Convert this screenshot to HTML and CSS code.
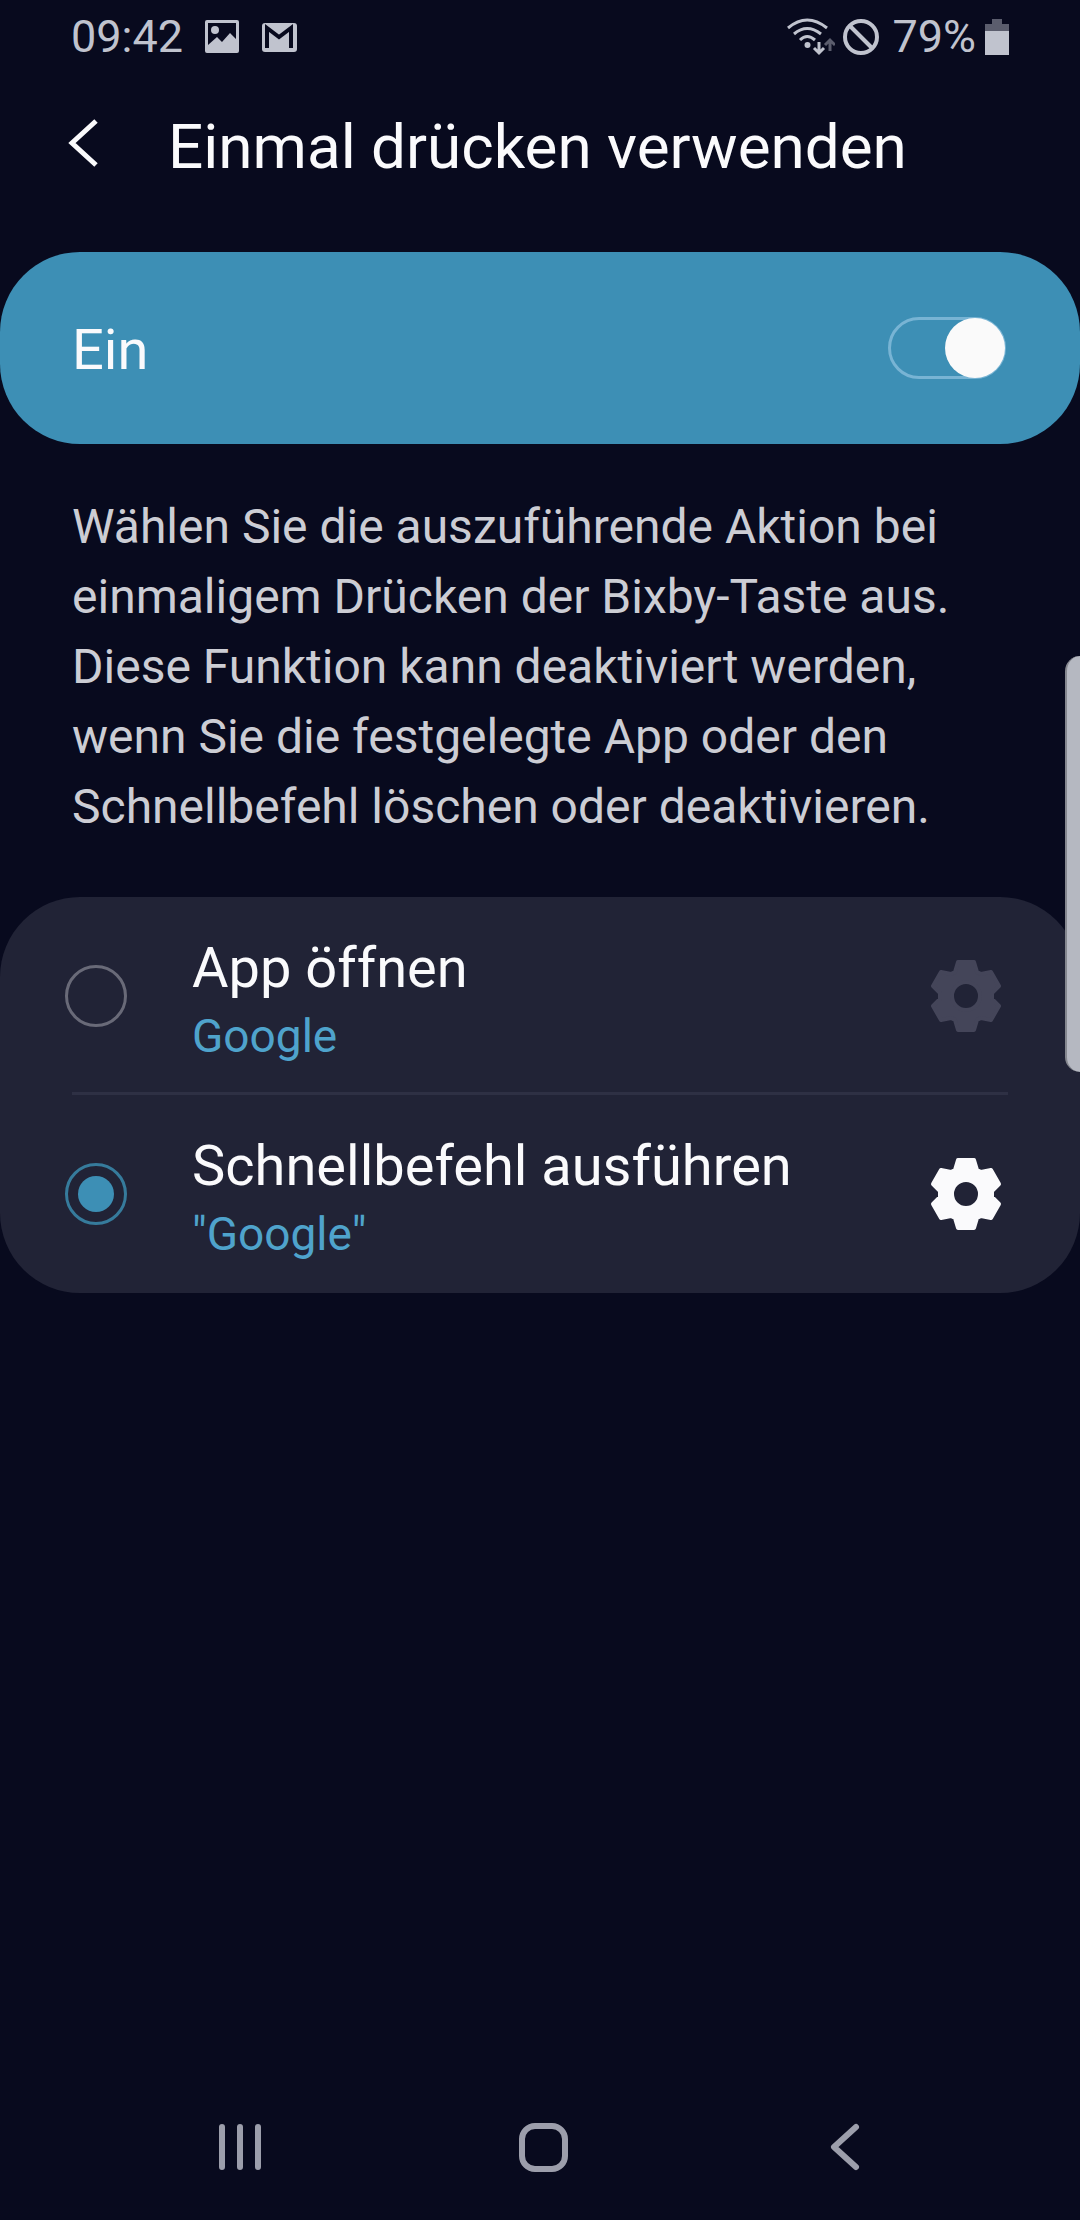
FILE: index.html
```html
<!DOCTYPE html>
<html lang="de">
<head>
<meta charset="utf-8">
<meta name="viewport" content="width=device-width, initial-scale=1">
<title>Einmal drücken verwenden</title>
<link rel="stylesheet" href="styles.css">
</head>
<body>
<div class="status-bar">
  <div class="status-left">
    <span>09:42</span>
    <svg width="36" height="36" viewBox="0 0 36 36" aria-hidden="true">
      <path fill="currentColor" fill-rule="evenodd" d="M3 1H33Q35 1 35 3V32Q35 34 33 34H3Q1 34 1 32V3Q1 1 3 1ZM4 4V26L13 18L18 23L26 14L32 20V4Z"/>
      <circle cx="11" cy="11" r="4" fill="currentColor"/>
    </svg>
    <svg width="36" height="36" viewBox="0 0 36 36" aria-hidden="true">
      <rect x="1" y="4" width="35" height="29" rx="3" fill="currentColor"/>
      <path d="M6 29V9L18 18L30 9V29" fill="none" stroke="#080a1e" stroke-width="4"/>
    </svg>
  </div>
  <div class="status-right">
    <svg width="48" height="38" viewBox="0 0 48 38" aria-hidden="true">
      <g fill="none" stroke="currentColor" stroke-width="3">
        <path d="M1 10Q20 -6 40 10"/>
        <path d="M7 16Q20 5 34 16"/>
        <path d="M13 22Q20 15 28 22"/>
        <path d="M32 24V34M27 30L32 35L37 30"/>
        <path class="faint" d="M43 33V22M38 27L43 22L48 27"/>
      </g>
      <circle cx="20.500" cy="27" r="3" fill="currentColor"/>
    </svg>
    <svg class="blocked" width="38" height="38" viewBox="0 0 38 38" fill="none" stroke="currentColor" stroke-width="4" aria-hidden="true">
      <circle cx="19" cy="19" r="16"/><path d="M8 8L30 30"/>
    </svg>
    <span>79%</span>
    <svg class="battery" width="24" height="36" viewBox="0 0 24 36" fill="currentColor" aria-hidden="true">
      <path class="faint" d="M7 0H17V5H24V12H0V5H7Z"/><path d="M0 12H24V36H0Z"/>
    </svg>
  </div>
</div>

<header class="header">
  <button class="back" type="button" aria-label="Zurück">
    <svg width="36" height="56" viewBox="0 0 36 56" fill="none" stroke="currentColor" stroke-width="5"><path d="M30 2L6 24L30 46"/></svg>
  </button>
  <h1>Einmal drücken verwenden</h1>
</header>

<main>
  <div class="master">
    <label for="master">Ein</label>
    <input class="switch" id="master" type="checkbox" role="switch" checked>
  </div>

  <p class="description">Wählen Sie die auszuführende Aktion bei einmaligem Drücken der Bixby-Taste aus. Diese Funktion kann deaktiviert werden, wenn Sie die festgelegte App oder den Schnellbefehl löschen oder deaktivieren.</p>

  <div class="card" role="radiogroup" aria-label="Aktion">
    <div class="option">
      <input class="radio" type="radio" name="action" id="open-app">
      <label for="open-app"><span class="option-title">App öffnen</span><span class="option-value">Google</span></label>
      <button class="gear" type="button" aria-label="App-Einstellungen" disabled>
        <svg width="72" height="76" viewBox="-36 -38 72 76"><path d="M-8-34H8L11-24L15-22L25-24L33-10L26-3V3L33 10L25 24L15 22L11 24L8 34H-8L-11 24L-15 22L-25 24L-33 10L-26 3V-3L-33-10L-25-24L-15-22L-11-24ZM14 0A14 14 0 1 0-14 0A14 14 0 1 0 14 0Z"/></svg>
      </button>
    </div>
    <hr>
    <div class="option">
      <input class="radio" type="radio" name="action" id="run-command" checked>
      <label for="run-command"><span class="option-title">Schnellbefehl ausführen</span><span class="option-value">"Google"</span></label>
      <button class="gear" type="button" aria-label="Schnellbefehl-Einstellungen">
        <svg width="72" height="76" viewBox="-36 -38 72 76"><path d="M-8-34H8L11-24L15-22L25-24L33-10L26-3V3L33 10L25 24L15 22L11 24L8 34H-8L-11 24L-15 22L-25 24L-33 10L-26 3V-3L-33-10L-25-24L-15-22L-11-24ZM14 0A14 14 0 1 0-14 0A14 14 0 1 0 14 0Z"/></svg>
      </button>
    </div>
  </div>
</main>

<nav class="nav-bar" aria-label="Navigation">
  <button type="button" aria-label="Letzte Apps">
    <svg width="50" height="50" viewBox="0 0 50 50"><path stroke-width="6" d="M6 5V45M24 5V45M42 5V45"/></svg>
  </button>
  <button type="button" aria-label="Startseite">
    <svg width="50" height="50" viewBox="0 0 50 50"><rect x="4" y="4" width="43" height="43" rx="13" stroke-width="6"/></svg>
  </button>
  <button type="button" aria-label="Zurück">
    <svg width="50" height="50" viewBox="0 0 50 50"><path stroke-width="6" d="M36 5L14 25L36 45"/></svg>
  </button>
</nav>

<div class="edge-handle"></div>
</body>
</html>
```

FILE: styles.css
```css
* { box-sizing: border-box; }

body {
  margin: 0;
  min-height: 100vh;
  display: flex;
  flex-direction: column;
  position: relative;
  overflow-x: hidden;
  background: #080a1e;
  color: #fafafc;
  font-family: Roboto, "Liberation Sans", sans-serif;
}

button {
  display: flex;
  align-items: center;
  justify-content: center;
  margin: 0;
  padding: 0;
  border: 0;
  background: none;
  color: inherit;
}

svg { display: block; flex: none; }

.status-bar {
  display: flex;
  justify-content: space-between;
  height: 74px;
  padding: 0 71px;
  color: #c0c3ce;
  font-size: 45px;
  line-height: 76px;
}
.status-left, .status-right { display: flex; align-items: center; }
.status-left { gap: 21px; }
.blocked { margin: 0 12px 0 7px; }
.battery { margin-left: 9px; }
.faint { opacity: 0.45; }

.header {
  display: flex;
  align-items: center;
  gap: 66px;
  height: 146px;
  margin-bottom: 32px;
  padding: 0 66px;
}
h1 {
  margin: 0;
  font-size: 62px;
  font-weight: 400;
  line-height: 76px;
}

.master {
  display: flex;
  align-items: center;
  justify-content: space-between;
  height: 192px;
  padding: 0 74px 0 72px;
  border-radius: 80px;
  background: #3d8fb5;
  font-size: 56px;
  line-height: 72px;
}
.master label { flex: 1; padding-top: 4px; }

.switch {
  appearance: none;
  display: flex;
  justify-content: flex-start;
  align-items: center;
  width: 118px;
  height: 62px;
  margin: 0;
  border: 3px solid #78b4d4;
  border-radius: 31px;
}
.switch::before {
  content: "";
  width: 60px;
  height: 60px;
  margin: -2px;
  border-radius: 50%;
  background: #fafafa;
}
.switch:checked { justify-content: flex-end; }

.description {
  margin: 0;
  padding: 48px 72px 55px;
  color: #cccdd4;
  font-size: 48px;
  line-height: 70px;
}

.card {
  border-radius: 80px;
  background: #212336;
}
.option {
  display: flex;
  align-items: center;
  height: 198px;
  padding: 0 78px 0 65px;
}
.option label {
  flex: 1;
  display: flex;
  flex-direction: column;
  padding: 8px 0 0 65px;
}
.option-title { font-size: 56px; line-height: 72px; }
.option-value { color: #4fa3cc; font-size: 46px; line-height: 64px; }

.radio {
  appearance: none;
  display: grid;
  place-items: center;
  width: 62px;
  height: 62px;
  margin: 0;
  border: 3px solid #696a78;
  border-radius: 50%;
}
.radio:checked { border-color: #367b9c; }
.radio:checked::before {
  content: "";
  width: 36px;
  height: 36px;
  border-radius: 50%;
  background: #3d8fb5;
}

.gear path {
  fill: currentColor;
  fill-rule: evenodd;
  stroke: currentColor;
  stroke-width: 4;
  stroke-linejoin: round;
}
.gear:disabled { color: #444559; }

hr {
  height: 3px;
  margin: -3px 72px 0;
  border: 0;
  background: #2e3044;
}

.nav-bar {
  display: flex;
  justify-content: space-between;
  margin-top: auto;
  padding: 0 210px 48px 216px;
  color: #9c9eab;
}
.nav-bar svg {
  fill: none;
  stroke: currentColor;
  stroke-linecap: round;
  stroke-linejoin: round;
}

/* Edge panel handle floats over the page at the right border */
.edge-handle {
  position: absolute;
  top: 656px;
  right: 0;
  width: 15px;
  height: 416px;
  border-left: 2px solid #85878f;
  border-radius: 15px 0 0 15px;
  background: #b5b8c1;
}
```
